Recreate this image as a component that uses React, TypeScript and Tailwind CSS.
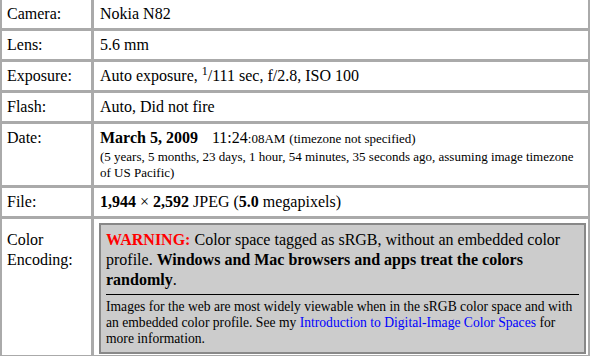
const rows: { label: string; value: React.ReactNode }[] = [
  { label: 'Camera:', value: 'Nokia N82' },
  { label: 'Lens:', value: '5.6 mm' },
  {
    label: 'Exposure:',
    value: (
      <>
        Auto exposure, <sup className="text-[12px]">1</sup>/111 sec, f/2.8, ISO 100
      </>
    ),
  },
  { label: 'Flash:', value: 'Auto, Did not fire' },
];

function Label({ children, top = false }: { children: React.ReactNode; top?: boolean }) {
  return (
    <div className={`bg-white pl-[5px] pr-1 ${top ? 'pt-[11px]' : 'py-1'} leading-5`}>
      {children}
    </div>
  );
}

function Value({ children }: { children: React.ReactNode }) {
  return <div className="bg-white pl-[6px] pr-[6px] py-1 leading-5">{children}</div>;
}

export default function App() {
  return (
    <div className="w-[590px] h-[356px] overflow-hidden bg-white font-['Liberation_Serif','Times_New_Roman',serif] text-[16px] text-black">
      <div className="grid grid-cols-[89px_1fr] gap-[3px] bg-[#aaaaaa] px-[2px] pb-[3px]">
        {rows.map((r) => (
          <div key={r.label} className="contents">
            <Label>{r.label}</Label>
            <Value>{r.value}</Value>
          </div>
        ))}

        <Label>Date:</Label>
        <Value>
          <div>
            <b>March 5, 2009</b>
            <span className="pl-[14px]">11:24</span>
            <span className="text-[13px]">:08AM</span>{' '}
            <span className="text-[13px]">(timezone not specified)</span>
          </div>
          <div className="text-[13px] leading-4">
            (5 years, 5 months, 23 days, 1 hour, 54 minutes, 35 seconds ago, assuming image timezone of
            US Pacific)
          </div>
        </Value>

        <Label>File:</Label>
        <Value>
          <b>1,944</b> × <b>2,592</b> JPEG (<b>5.0</b> megapixels)
        </Value>

        <Label top>
          Color
          <br />
          Encoding:
        </Label>
        <div className="bg-white pl-[5px] pr-[2px] pt-1 pb-[1px]">
          <div className="border-2 border-[#888888] bg-[#cccccc] px-[5px] pt-[5px] pb-[5px]">
            <div className="leading-5">
              <b className="text-[#ff0000]">WARNING:</b> Color space tagged as sRGB, without an embedded
              color profile. <b>Windows and Mac browsers and apps treat the colors randomly</b>.
            </div>
            <div className="mt-1 border-t border-black pt-1">
              <p className="pr-[3px] text-[13.6px] leading-4">
                Images for the web are most widely viewable when in the sRGB color space and with an
                embedded color profile. See my{' '}
                <a className="text-[#0000ff]">Introduction to Digital-Image Color Spaces</a> for more
                information.
              </p>
            </div>
          </div>
        </div>
      </div>
    </div>
  );
}
